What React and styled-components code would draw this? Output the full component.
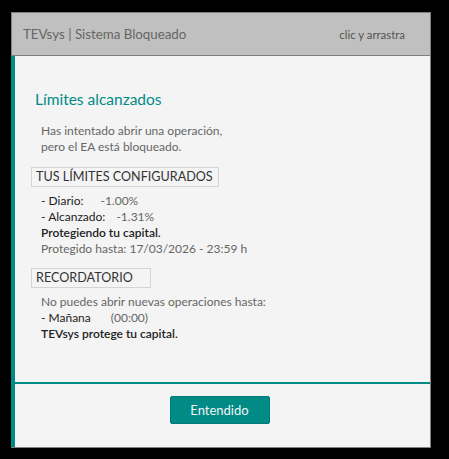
import React from 'react';
import styled, { createGlobalStyle } from 'styled-components';

const GlobalStyle = createGlobalStyle`
    html, body {
        margin: 0;
        padding: 0;
        background: #000;
    }
    body {
        font-family: Lato, "Noto Sans", sans-serif;
    }
`

const teal = '#008b87'

export const Screen = styled.div`
    width: 449px;
    height: 459px;
    padding: 12px 0 0 11px;
    box-sizing: border-box;
`

export const Window = styled.div`
    width: 420px;
    height: 436px;
    display: flex;
    flex-direction: column;
    box-sizing: border-box;
    border: 1px solid #808080;
    border-left: none;
    background: #f4f4f4;
`

export const TitleBar = styled.div`
    height: 43px;
    flex: none;
    display: flex;
    align-items: center;
    justify-content: space-between;
    padding: 0 25px 0 11px;
    box-sizing: border-box;
    background: #c0c0c0;
    border-left: 1px solid #808080;
    border-bottom: 1px solid #808080;
`

export const Title = styled.span`
    font-size: 13.3px;
    color: #666;
`

export const Hint = styled.span`
    font-size: 11.4px;
    color: #555;
`

export const Body = styled.div`
    flex: 1;
    display: flex;
    flex-direction: column;
    border-left: 4px solid ${teal};
`

export const Main = styled.div`
    flex: 1;
    padding: 32px 16px 0 16px;
    border-bottom: 2px solid ${teal};
`

export const Heading = styled.h1`
    margin: 0 0 0 4px;
    font-size: 15.5px;
    font-weight: 400;
    line-height: 22px;
    color: ${teal};
`

export const Text = styled.div`
    margin-left: 10px;
    font-size: 12px;
    line-height: 16px;
    color: ${p => (p.$strong ? '#222' : '#666')};
    font-weight: ${p => (p.$strong ? 600 : 400)};
`

export const Description = styled.div`
    margin-top: 13px;
`

export const SectionLabel = styled.div`
    width: ${p => p.$width}px;
    height: 20px;
    box-sizing: border-box;
    margin-top: ${p => p.$top}px;
    margin-bottom: 6px;
    padding-left: 4px;
    border: 1px solid #d4d4d4;
    font-size: 12.6px;
    line-height: 18px;
    white-space: nowrap;
    color: #333;
`

export const Row = styled.div`
    margin-left: 10px;
    font-size: 12px;
    line-height: 16px;
    color: #222;
`

export const Value = styled.span`
    display: inline-block;
    margin-left: ${p => p.$gap}px;
    color: #666;
`

export const Footer = styled.div`
    height: 63px;
    flex: none;
    display: flex;
    justify-content: center;
    padding-top: 12px;
    box-sizing: border-box;
`

export const Button = styled.button`
    width: 100px;
    height: 28px;
    margin-left: -6px;
    border: 1px solid #007a76;
    border-radius: 2px;
    background: ${teal};
    color: #f2f2f2;
    font-family: inherit;
    font-size: 13px;
    cursor: pointer;
`

const App = () => {
    return (
        <>
            <GlobalStyle />
            <Screen>
                <Window>
                    <TitleBar>
                        <Title>TEVsys | Sistema Bloqueado</Title>
                        <Hint>clic y arrastra</Hint>
                    </TitleBar>
                    <Body>
                        <Main>
                            <Heading>Límites alcanzados</Heading>
                            <Description>
                                <Text>Has intentado abrir una operación,</Text>
                                <Text>pero el EA está bloqueado.</Text>
                            </Description>
                            <SectionLabel $width={188} $top={12}>TUS LÍMITES CONFIGURADOS</SectionLabel>
                            <Row>- Diario:<Value $gap={17}>-1.00%</Value></Row>
                            <Row>- Alcanzado:<Value $gap={11}>-1.31%</Value></Row>
                            <Text $strong>Protegiendo tu capital.</Text>
                            <Text>Protegido hasta: 17/03/2026 - 23:59 h</Text>
                            <SectionLabel $width={120} $top={11}>RECORDATORIO</SectionLabel>
                            <Text>No puedes abrir nuevas operaciones hasta:</Text>
                            <Row>- Mañana<Value $gap={20}>(00:00)</Value></Row>
                            <Text $strong>TEVsys protege tu capital.</Text>
                        </Main>
                        <Footer>
                            <Button>Entendido</Button>
                        </Footer>
                    </Body>
                </Window>
            </Screen>
        </>
    )
}

export default App
